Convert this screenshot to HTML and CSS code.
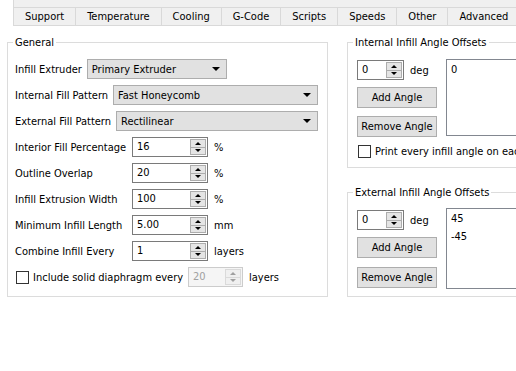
FILE: index.html
```html
<!DOCTYPE html>
<html lang="en">

<head>
    <meta charset="UTF-8">
    <title>Infill</title>
    <link rel="stylesheet" href="styles.css">
</head>

<body>
    <div class="tabs">
        <div class="tab tab-current"></div>
        <div class="tab">Support</div>
        <div class="tab">Temperature</div>
        <div class="tab">Cooling</div>
        <div class="tab">G-Code</div>
        <div class="tab">Scripts</div>
        <div class="tab">Speeds</div>
        <div class="tab">Other</div>
        <div class="tab">Advanced</div>
    </div>

    <div class="pane">
        <fieldset class="group general">
            <legend>General</legend>
            <div class="row">
                <span class="label">Infill Extruder</span>
                <div class="combo combo-short"><span>Primary Extruder</span><i class="arrow-down"></i></div>
            </div>
            <div class="row">
                <span class="label">Internal Fill Pattern</span>
                <div class="combo combo-wide"><span>Fast Honeycomb</span><i class="arrow-down"></i></div>
            </div>
            <div class="row">
                <span class="label">External Fill Pattern</span>
                <div class="combo combo-wide"><span>Rectilinear</span><i class="arrow-down"></i></div>
            </div>
            <div class="row">
                <span class="label label-fixed">Interior Fill Percentage</span>
                <div class="spin"><span class="spin-value">16</span><span class="spin-btns"><i class="up"></i><i class="down"></i></span></div>
                <span class="unit">%</span>
            </div>
            <div class="row">
                <span class="label label-fixed">Outline Overlap</span>
                <div class="spin"><span class="spin-value">20</span><span class="spin-btns"><i class="up"></i><i class="down"></i></span></div>
                <span class="unit">%</span>
            </div>
            <div class="row">
                <span class="label label-fixed">Infill Extrusion Width</span>
                <div class="spin"><span class="spin-value">100</span><span class="spin-btns"><i class="up"></i><i class="down"></i></span></div>
                <span class="unit">%</span>
            </div>
            <div class="row">
                <span class="label label-fixed">Minimum Infill Length</span>
                <div class="spin"><span class="spin-value">5.00</span><span class="spin-btns"><i class="up"></i><i class="down"></i></span></div>
                <span class="unit">mm</span>
            </div>
            <div class="row">
                <span class="label label-fixed">Combine Infill Every</span>
                <div class="spin"><span class="spin-value">1</span><span class="spin-btns"><i class="up"></i><i class="down"></i></span></div>
                <span class="unit">layers</span>
            </div>
            <div class="row">
                <label class="check check-fixed"><span class="box"></span>Include solid diaphragm every</label>
                <div class="spin spin-small spin-disabled"><span class="spin-value">20</span><span class="spin-btns"><i class="up"></i><i class="down"></i></span></div>
                <span class="unit">layers</span>
            </div>
        </fieldset>

        <div class="side">
            <fieldset class="group angles">
                <legend>Internal Infill Angle Offsets</legend>
                <div class="angle-box">
                    <div class="angle-controls">
                        <div class="spin-row">
                            <div class="spin spin-angle"><span class="spin-value">0</span><span class="spin-btns"><i class="up"></i><i class="down"></i></span></div>
                            <span class="unit">deg</span>
                        </div>
                        <button class="btn">Add Angle</button>
                        <button class="btn">Remove Angle</button>
                    </div>
                    <ul class="list">
                        <li>0</li>
                    </ul>
                </div>
                <label class="check check-angles"><span class="box"></span>Print every infill angle on each layer</label>
            </fieldset>

            <fieldset class="group angles angles-external">
                <legend>External Infill Angle Offsets</legend>
                <div class="angle-box">
                    <div class="angle-controls">
                        <div class="spin-row">
                            <div class="spin spin-angle"><span class="spin-value">0</span><span class="spin-btns"><i class="up"></i><i class="down"></i></span></div>
                            <span class="unit">deg</span>
                        </div>
                        <button class="btn">Add Angle</button>
                        <button class="btn">Remove Angle</button>
                    </div>
                    <ul class="list">
                        <li>45</li>
                        <li>-45</li>
                    </ul>
                </div>
            </fieldset>
        </div>
    </div>
</body>

</html>
```

FILE: styles.css
```css
* {
    box-sizing: border-box;
}

html,
body {
    margin: 0;
}

body {
    width: 516px;
    height: 371px;
    overflow: hidden;
    background: #fff;
    font-family: Tahoma, "DejaVu Sans Condensed", "Liberation Sans", sans-serif;
    font-size: 11px;
    color: #000;
}

/* tab bar */
.tabs {
    display: flex;
    align-items: flex-end;
    height: 26px;
    background: #f0f0f0;
    border-bottom: 1px solid #d9d9d9;
}

.tab {
    flex: none;
    height: 18px;
    padding: 0 11px;
    display: flex;
    align-items: center;
    background: #f0f0f0;
    border: 1px solid #d9d9d9;
    border-left: none;
    border-bottom: none;
    white-space: nowrap;
}

.tab-current {
    position: relative;
    width: 14px;
    height: 26px;
    padding: 0;
    margin-bottom: -1px;
    background: #fff;
    border-top: none;
}

/* page */
.pane {
    display: flex;
    align-items: flex-start;
    gap: 19px;
    padding: 9px 0 0 7px;
}

.group {
    margin: 0;
    min-width: 0;
    border: 1px solid #dcdcdc;
}

.group legend {
    padding: 0 2px;
    line-height: 15px;
}

.general {
    flex: none;
    width: 321px;
    padding: 6px 9px 6px 7px;
}

.general legend {
    margin-left: -2px;
}

.row {
    display: flex;
    align-items: center;
    height: 26px;
    white-space: nowrap;
}

.label {
    margin-right: 5px;
}

.label-fixed {
    width: 117px;
    margin-right: 0;
}

/* combo box */
.combo {
    display: flex;
    align-items: center;
    justify-content: space-between;
    height: 20px;
    padding: 0 6px 0 4px;
    background: #e1e1e1;
    border: 1px solid #adadad;
}

.combo-short {
    width: 140px;
}

.combo-wide {
    flex: 1;
}

.arrow-down {
    width: 0;
    height: 0;
    border-left: 4px solid transparent;
    border-right: 4px solid transparent;
    border-top: 4px solid #000;
}

/* spin box */
.spin {
    display: flex;
    width: 76px;
    height: 20px;
    background: #fff;
    border: 1px solid #7a7a7a;
}

.spin-value {
    flex: 1;
    padding-left: 4px;
    line-height: 18px;
}

.spin-btns {
    display: flex;
    flex-direction: column;
    width: 16px;
    margin: 1px;
    background: #e5e5e5;
    border: 1px solid #adadad;
}

.spin-btns i {
    flex: 1;
    display: flex;
    align-items: center;
    justify-content: center;
}

.spin-btns .up {
    border-bottom: 1px solid #adadad;
}

.spin-btns .up::after,
.spin-btns .down::after {
    content: "";
    border-left: 3px solid transparent;
    border-right: 3px solid transparent;
}

.spin-btns .up::after {
    border-bottom: 3px solid #000;
}

.spin-btns .down::after {
    border-top: 3px solid #000;
}

.spin-small {
    width: 55px;
}

.spin-disabled {
    background: #f5f5f5;
    border-color: #cccccc;
    color: #a0a0a0;
}

.spin-disabled .spin-btns {
    background: #f0f0f0;
    border-color: #dadada;
}

.spin-disabled .spin-btns .up {
    border-bottom-color: #dadada;
}

.spin-disabled .spin-btns .up::after {
    border-bottom-color: #a0a0a0;
}

.spin-disabled .spin-btns .down::after {
    border-top-color: #a0a0a0;
}

.unit {
    margin-left: 6px;
}

/* check box */
.check {
    display: flex;
    align-items: center;
    gap: 4px;
    white-space: nowrap;
}

.check .box {
    width: 13px;
    height: 13px;
    margin-left: 1px;
    background: #fff;
    border: 1px solid #333;
}

.check-fixed {
    width: 173px;
}

/* angle offsets */
.side {
    display: flex;
    flex-direction: column;
    gap: 17px;
    width: 220px;
    flex: none;
}

.angles {
    padding: 10px 0 9px 9px;
}

.angles legend {
    margin-left: -4px;
}

.angle-box {
    display: flex;
    gap: 9px;
}

.angle-controls {
    display: flex;
    flex-direction: column;
    width: 80px;
}

.spin-row {
    display: flex;
    align-items: center;
    margin-bottom: 7px;
}

.spin-angle {
    width: 47px;
}

.btn {
    height: 21px;
    padding: 0;
    font: inherit;
    color: #000;
    background: #e1e1e1;
    border: 1px solid #adadad;
}

.btn + .btn {
    margin-top: 8px;
}

.list {
    flex: 1;
    height: 77px;
    margin: -1px 0 0;
    padding: 1px 4px;
    list-style: none;
    line-height: 18px;
    background: #fff;
    border: 1px solid #828790;
}

.check-angles {
    margin-top: 8px;
}

.angles-external {
    padding: 9px 0 7px 9px;
}

.angles-external .spin-row {
    margin-top: 1px;
}

.angles-external .btn + .btn {
    margin-top: 9px;
}

.angles-external .list {
    height: 81px;
}
```
